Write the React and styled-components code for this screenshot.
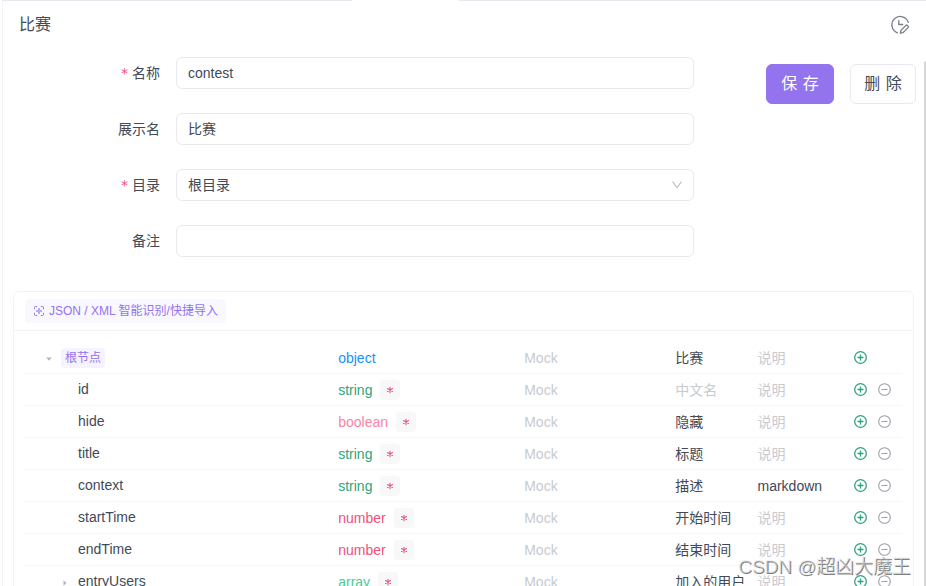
import React from "react";
import styled, { createGlobalStyle } from "styled-components";

const GlobalStyle = createGlobalStyle`
  *, *::before, *::after { box-sizing: border-box; }
  html, body { margin: 0; height: 100%; overflow: hidden; }
  body {
    background: #fff;
    color: #434956;
    font: 14px/22px "Liberation Sans", "Noto Sans CJK SC", sans-serif;
  }
`;

const Page = styled.div`
  position: relative;
  width: 926px;
  height: 586px;
  padding-left: 2px;
  overflow: hidden;
`;
const TabEdge = styled.div`
  display: grid;
  grid-template-columns: 350px 107px 1fr;
  height: 1px;
`;
const EdgeLine = styled.span`
  grid-column: ${(p) => p.$column};
  background: #e5e8ee;
`;
const Pane = styled.main`
  height: 585px;
  border-left: 1px solid #f2f3f5;
`;
const Header = styled.header`
  display: flex;
  justify-content: space-between;
  align-items: center;
  height: 46px;
  padding: 2px 16px 0 16px;
`;
const Title = styled.h1`
  margin: 0;
  font-size: 16px;
  font-weight: 400;
  line-height: 24px;
`;
const FormArea = styled.section`
  display: flex;
  align-items: flex-start;
  height: 244px;
  padding: 10px 10px 0 0;
`;
const Form = styled.div`
  display: grid;
  gap: 24px;
  width: 691px;
`;
const Field = styled.label`
  display: grid;
  grid-template-columns: 157px 518px;
  column-gap: 16px;
  align-items: center;
  height: 32px;
`;
const LabelText = styled.span`
  display: flex;
  justify-content: flex-end;
`;
const Required = styled.span`
  margin-right: 4px;
  color: #f0527a;
  font-family: "DejaVu Sans", sans-serif;
`;
const Control = styled.span`
  display: flex;
  align-items: center;
  justify-content: space-between;
  height: 32px;
  padding: 0 11px;
  border: 1px solid #e9e9ee;
  border-radius: 6px;
`;
const Actions = styled.div`
  display: flex;
  gap: 16px;
  margin: 7px 0 0 72px;
`;
const Button = styled.button`
  width: ${(p) => (p.$primary ? 68 : 66)}px;
  height: 40px;
  padding: 0 0 1px;
  border: 1px solid ${(p) => (p.$primary ? "#9373ee" : "#e9e9ee")};
  border-radius: 6px;
  background: ${(p) => (p.$primary ? "#9373ee" : "#fff")};
  color: ${(p) => (p.$primary ? "#fff" : "#434956")};
  font: inherit;
  font-size: 16px;
  word-spacing: 1px;
`;
const Schema = styled.section`
  width: 901px;
  height: 330px;
  margin-left: 10px;
  border: 1px solid #f2f3f5;
  border-radius: 6px 6px 0 0;
`;
const Toolbar = styled.div`
  height: 39px;
  padding: 7px 11px;
  border-bottom: 1px solid #f2f3f5;
`;
const ImportButton = styled.button`
  display: flex;
  align-items: center;
  gap: 4px;
  width: 201px;
  height: 24px;
  padding: 0 8px;
  border: 0;
  border-radius: 4px;
  background: #faf8ff;
  color: #9373ee;
  font: inherit;
  font-size: 12px;
  white-space: nowrap;
`;
const Rows = styled.div`
  padding: 11px 11px 0;
`;
const Row = styled.div`
  display: grid;
  grid-template-columns: 313.2px 186px 151px 82.3px 96.5px 1fr;
  height: 32px;
  border-bottom: 1px solid #f7f7f9;
  white-space: nowrap;
`;
const NameCell = styled.div`
  display: flex;
  align-items: center;
  height: 30px;
`;
const Toggle = styled.span`
  display: flex;
  justify-content: center;
  width: ${(p) => (p.$root ? 36 : 53)}px;
  padding: ${(p) => (p.$root ? "3px 0 0 11px" : "3px 0 0 26px")};
`;
const RootTag = styled.span`
  height: 20px;
  margin-top: 2px;
  padding: 0 4px;
  border-radius: 4px;
  background: #f6f2ff;
  color: #9373ee;
  font-size: 12px;
  line-height: 20px;
`;
const Cell = styled.div`
  display: flex;
  align-items: center;
  height: 32px;
  color: ${(p) => (p.$muted ? "#c8cad0" : "inherit")};
`;
const typeColors = {
  object: "#1890ff",
  string: "#2ca57c",
  boolean: "#fa84a6",
  number: "#f0527a",
  array: "#4bc99b",
};
const TypeName = styled.span`
  color: ${(p) => typeColors[p.$type]};
`;
const RequiredBadge = styled.span`
  display: grid;
  place-items: center;
  width: 20px;
  height: 20px;
  margin-left: 8px;
  border-radius: 4px;
  background: #f8f8f9;
`;
const RowActions = styled.div`
  display: flex;
  align-items: center;
  gap: 11px;
  height: 31px;
`;
const Scrollbar = styled.div`
  position: absolute;
  top: 61px;
  right: 0;
  width: 2px;
  height: 525px;
  border-radius: 2px 0 0 0;
  background: #d6d6d6;
`;
const Watermark = styled.div`
  position: absolute;
  left: 738px;
  top: 553px;
  color: rgba(225, 225, 225, 0.55);
  font-size: 19px;
  line-height: 28px;
  letter-spacing: -0.08px;
  white-space: nowrap;
  text-shadow: 1px 1px 0 rgba(0, 0, 0, 0.5);
`;

const HistoryIcon = () => (
  <svg width="20" height="20" viewBox="0 0 20 20" fill="none" stroke="#777c88" strokeWidth="1.3" strokeLinecap="round" strokeLinejoin="round">
    <path d="M7.4 17.8A8.4 8.4 0 1 1 18.3 7.4M8.8 5.7v3.8h3.9" />
    <path d="m10.9 15.4 5-5a1 1 0 0 1 1.4 0l.8.8a1 1 0 0 1 0 1.4l-5 5-2.7.5z" />
  </svg>
);
const ScanIcon = () => (
  <svg width="12" height="12" viewBox="0 0 12 12" fill="none" stroke="currentColor">
    <path d="M4.2 1.5H2.5a1 1 0 0 0-1 1v1.7M7.8 1.5h1.7a1 1 0 0 1 1 1v1.7M1.5 7.8v1.7a1 1 0 0 0 1 1h1.7M10.5 7.8v1.7a1 1 0 0 1-1 1H7.8" />
    <path d="M6 3v6M3 6h6" strokeWidth="2" opacity=".6" />
  </svg>
);
const ChevronIcon = () => (
  <svg width="10" height="8" viewBox="0 0 10 8" fill="none" stroke="#bfbfc4" strokeWidth="1.1">
    <path d="m.5.7 4.5 6 4.5-6" />
  </svg>
);
const Caret = ({ open }) => (
  <svg width="6" height="6" viewBox="0 0 6 6" fill="#b4b6bc">
    <path d={open ? "M.2 1.5h5.6L3 4.7z" : "M1.5.2v5.6L4.5 3z"} />
  </svg>
);
const Asterisk = () => (
  <svg width="8" height="8" viewBox="0 0 8 8" stroke="#f0527a" strokeWidth="1.1" strokeLinecap="round">
    <path d="M4 1.2v5.6M1.5 2.6l5 2.8M6.5 2.6l-5 2.8" />
  </svg>
);
const CircleIcon = ({ add }) => (
  <svg width="13" height="13" viewBox="0 0 13 13" fill="none" stroke={add ? "#2ca57c" : "#9da0a8"} strokeWidth={add ? 1.3 : 1.1}>
    <circle cx="6.5" cy="6.5" r="5.8" />
    <path d={add ? "M6.5 3.5v6M3.5 6.5h6" : "M3.5 6.5h6"} />
  </svg>
);

const fields = [
  { label: "名称", value: "contest", required: true },
  { label: "展示名", value: "比赛" },
  { label: "目录", value: "根目录", required: true, select: true },
  { label: "备注", value: "" },
];
const rows = [
  { name: "根节点", type: "object", title: "比赛", root: true },
  { name: "id", type: "string" },
  { name: "hide", type: "boolean", title: "隐藏" },
  { name: "title", type: "string", title: "标题" },
  { name: "context", type: "string", title: "描述", note: "markdown" },
  { name: "startTime", type: "number", title: "开始时间" },
  { name: "endTime", type: "number", title: "结束时间" },
  { name: "entryUsers", type: "array", title: "加入的用户", collapsed: true },
];

export default function App() {
  return (
    <Page>
      <GlobalStyle />
      <TabEdge>
        <EdgeLine $column={1} />
        <EdgeLine $column={3} />
      </TabEdge>
      <Pane>
        <Header>
          <Title>比赛</Title>
          <HistoryIcon />
        </Header>
        <FormArea>
          <Form>
            {fields.map((f) => (
              <Field key={f.label}>
                <LabelText>
                  {f.required && <Required>*</Required>}
                  {f.label}
                </LabelText>
                <Control>
                  {f.value}
                  {f.select && <ChevronIcon />}
                </Control>
              </Field>
            ))}
          </Form>
          <Actions>
            <Button $primary>保 存</Button>
            <Button>删 除</Button>
          </Actions>
        </FormArea>
        <Schema>
          <Toolbar>
            <ImportButton>
              <ScanIcon />
              JSON / XML 智能识别/快捷导入
            </ImportButton>
          </Toolbar>
          <Rows>
            {rows.map((r) => (
              <Row key={r.name}>
                <NameCell>
                  <Toggle $root={r.root}>
                    {(r.root || r.collapsed) && <Caret open={r.root} />}
                  </Toggle>
                  {r.root ? <RootTag>{r.name}</RootTag> : r.name}
                </NameCell>
                <Cell>
                  <TypeName $type={r.type}>{r.type}</TypeName>
                  {!r.root && (
                    <RequiredBadge>
                      <Asterisk />
                    </RequiredBadge>
                  )}
                </Cell>
                <Cell $muted>Mock</Cell>
                <Cell $muted={!r.title}>{r.title || "中文名"}</Cell>
                <Cell $muted={!r.note}>{r.note || "说明"}</Cell>
                <RowActions>
                  <CircleIcon add />
                  {!r.root && <CircleIcon />}
                </RowActions>
              </Row>
            ))}
          </Rows>
        </Schema>
      </Pane>
      <Scrollbar />
      <Watermark>CSDN @超凶大魔王</Watermark>
    </Page>
  );
}
